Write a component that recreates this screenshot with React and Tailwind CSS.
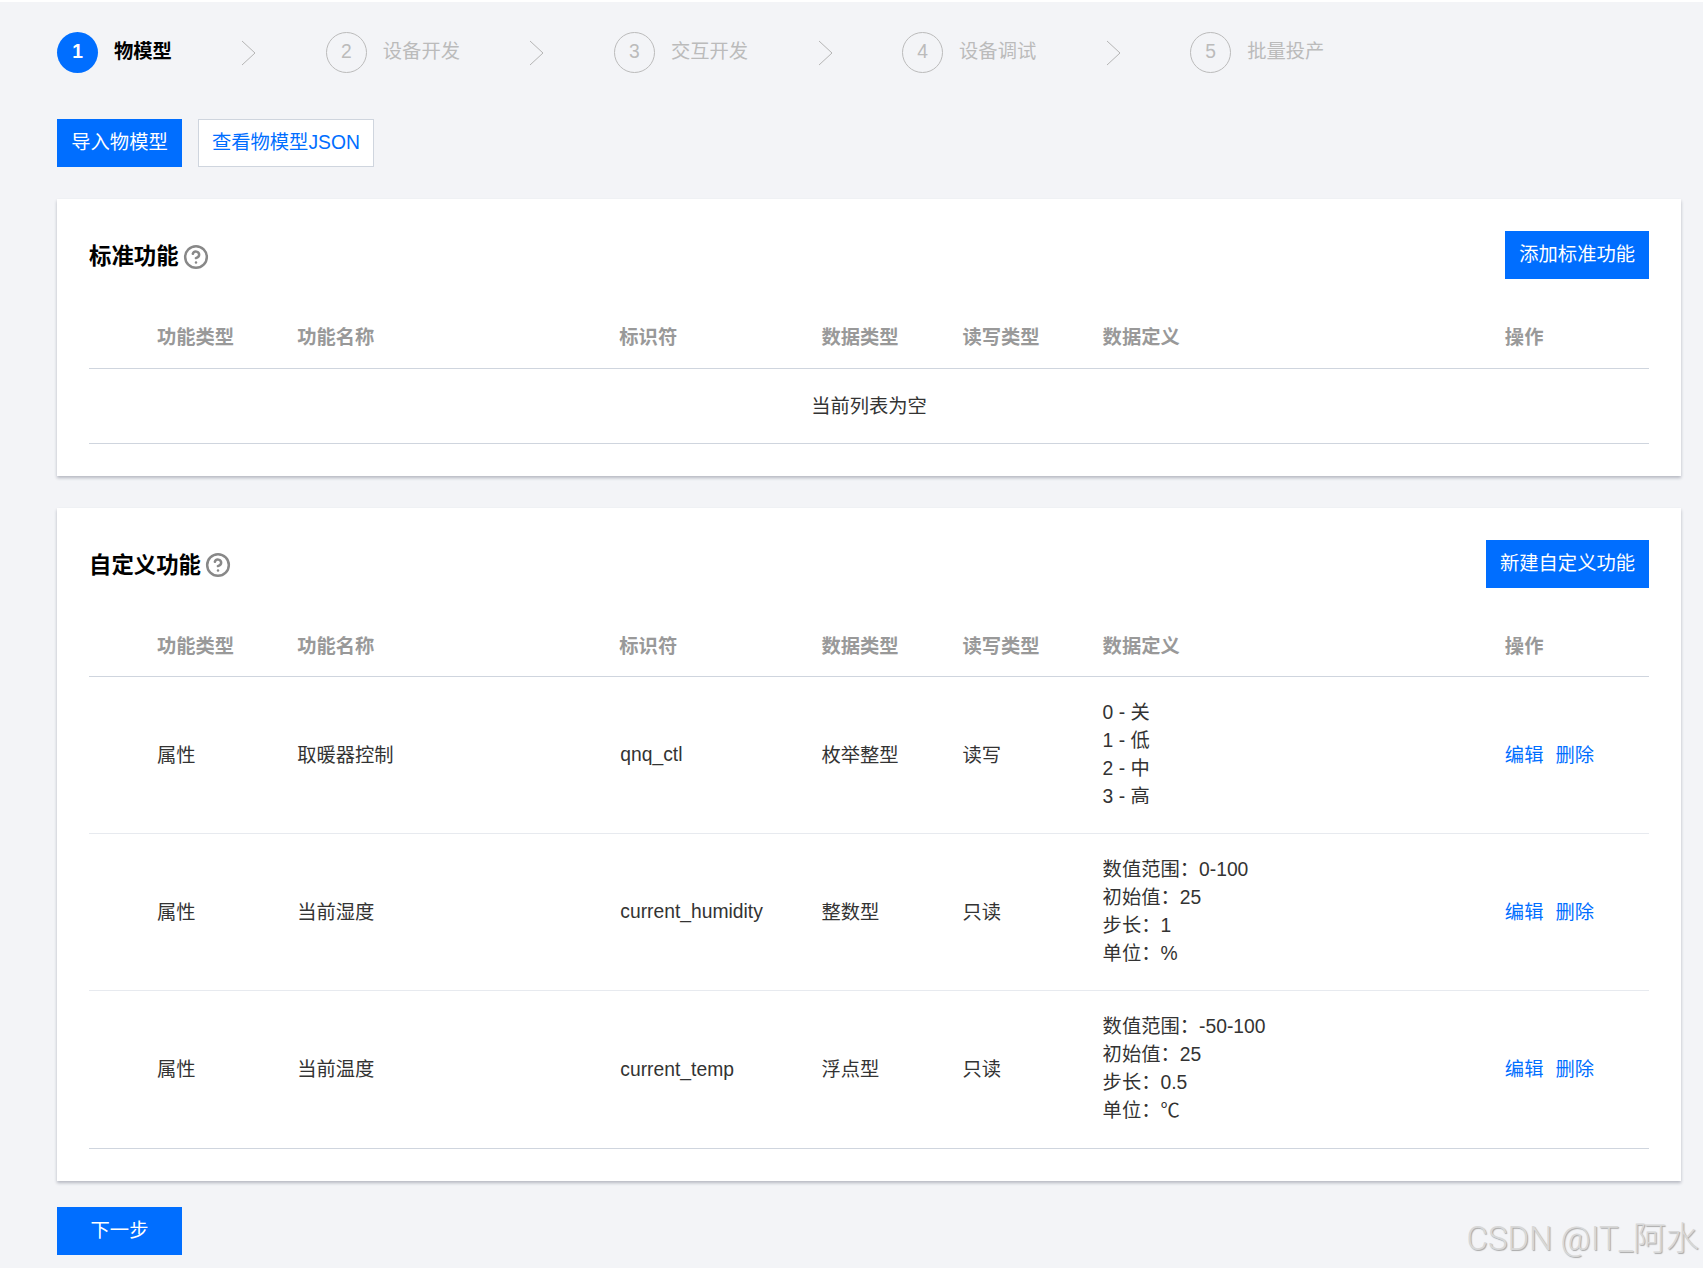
import { CircleHelp } from 'lucide-react'

const steps = ['物模型', '设备开发', '交互开发', '设备调试', '批量投产']

const rows = [
  { type: '属性', name: '取暖器控制', id: 'qnq_ctl', dataType: '枚举整型', rw: '读写', def: ['0 - 关', '1 - 低', '2 - 中', '3 - 高'] },
  { type: '属性', name: '当前湿度', id: 'current_humidity', dataType: '整数型', rw: '只读', def: ['数值范围：0-100', '初始值：25', '步长：1', '单位：%'] },
  { type: '属性', name: '当前温度', id: 'current_temp', dataType: '浮点型', rw: '只读', def: ['数值范围：-50-100', '初始值：25', '步长：0.5', '单位：℃'] },
]

function Stepper() {
  return (
    <div className="flex items-center h-[41px]">
      {steps.map((label, i) => (
        <div key={label} className="flex items-center">
          {i === 0 ? (
            <div className="w-[41px] h-[41px] rounded-full bg-[#006eff] text-white font-bold flex items-center justify-center">{i + 1}</div>
          ) : (
            <div className="w-[41px] h-[41px] rounded-full border border-[#bbbbbb] text-[#bbbbbb] flex items-center justify-center">{i + 1}</div>
          )}
          <span className={i === 0 ? 'ml-4 font-bold text-black' : 'ml-4 text-[#bbbbbb]'}>{label}</span>
          {i < steps.length - 1 && (
            <svg className="mx-[69.5px]" width="15" height="26" viewBox="0 0 15 26" fill="none">
              <path d="M1 1L14 13L1 25" stroke="#b5b5b5" strokeWidth="1" />
            </svg>
          )}
        </div>
      ))}
    </div>
  )
}

function PrimaryButton({ children }) {
  return <button className="h-12 px-[14px] pt-[1px] bg-[#006eff] text-white whitespace-nowrap">{children}</button>
}

function FunctionTable({ children }) {
  const heads = ['功能类型', '功能名称', '标识符', '数据类型', '读写类型', '数据定义', '操作']
  return (
    <table className="w-full table-fixed border-collapse mt-[27px]">
      <colgroup>
        <col className="w-[208px]" />
        <col className="w-[322px]" />
        <col className="w-[202px]" />
        <col className="w-[141px]" />
        <col className="w-[140px]" />
        <col className="w-[402px]" />
        <col className="w-[144px]" />
      </colgroup>
      <thead>
        <tr className="h-[62px] border-b border-[#cfd5de]">
          {heads.map((h, i) => (
            <th key={h} className={i === 0 ? 'pl-[68px] pt-[4px] text-left font-bold text-[#999999]' : 'pt-[4px] text-left font-bold text-[#999999]'}>{h}</th>
          ))}
        </tr>
      </thead>
      <tbody>{children}</tbody>
    </table>
  )
}

function Card({ title, action, children }) {
  return (
    <div className="bg-white p-8 shadow-[0_2px_3px_0_rgba(54,58,80,0.32)]">
      <div className="flex items-center justify-between">
        <div className="flex items-center gap-[4px] pt-[4px]">
          <h2 className="text-[22.4px] font-bold text-black">{title}</h2>
          <CircleHelp size={26} strokeWidth={2.3} color="#888888" />
        </div>
        <PrimaryButton>{action}</PrimaryButton>
      </div>
      {children}
    </div>
  )
}

export default function App() {
  return (
    <div className="relative min-h-[1268px] bg-[#f3f4f7] border-t-2 border-white px-[57px] pt-[30px] pb-[14px] pr-[22px] text-[19.3px] text-[#333333] font-['Liberation_Sans','Noto_Sans_CJK_SC',sans-serif]">
      <Stepper />

      <div className="flex gap-4 mt-[46px]">
        <button className="h-12 w-[125px] pt-[1px] bg-[#006eff] text-white whitespace-nowrap">导入物模型</button>
        <button className="h-12 px-[13px] bg-white border border-[#cfd5de] text-[#006eff] whitespace-nowrap">查看物模型JSON</button>
      </div>

      <div className="mt-8">
        <Card title="标准功能" action="添加标准功能">
          <FunctionTable>
            <tr className="h-[75px] border-b border-[#cfd5de]">
              <td colSpan={7} className="text-center pt-[3px]">当前列表为空</td>
            </tr>
          </FunctionTable>
        </Card>
      </div>

      <div className="mt-8">
        <Card title="自定义功能" action="新建自定义功能">
          <FunctionTable>
            {rows.map((r, i) => (
              <tr key={r.id} className={i === rows.length - 1 ? 'h-[158px] border-b border-[#cfd5de]' : 'border-b border-[#e7eaef]'}>
                <td className="pl-[68px] pt-[2px]">{r.type}</td>
                <td className="pt-[2px]">{r.name}</td>
                <td className="pl-[1px] pt-[1px]">{r.id}</td>
                <td className="pt-[2px]">{r.dataType}</td>
                <td className="pt-[2px]">{r.rw}</td>
                <td className="py-[22px] leading-[28px] align-top">
                  {r.def.map((d) => <div key={d}>{d}</div>)}
                </td>
                <td className="pt-[2px] text-[#006eff]">
                  <span>编辑</span>
                  <span className="ml-3">删除</span>
                </td>
              </tr>
            ))}
          </FunctionTable>
        </Card>
      </div>

      <div className="mt-[26px]">
        <button className="h-12 w-[125px] pt-[1px] bg-[#006eff] text-white">下一步</button>
      </div>

      <div className="absolute right-[4px] bottom-[14px] text-[33px] leading-none font-light text-[#d8d8d8] font-['Roboto','Noto_Sans_CJK_SC',sans-serif] [text-shadow:1px_1px_1px_#a8a8a8]">CSDN @IT_阿水</div>
    </div>
  )
}
